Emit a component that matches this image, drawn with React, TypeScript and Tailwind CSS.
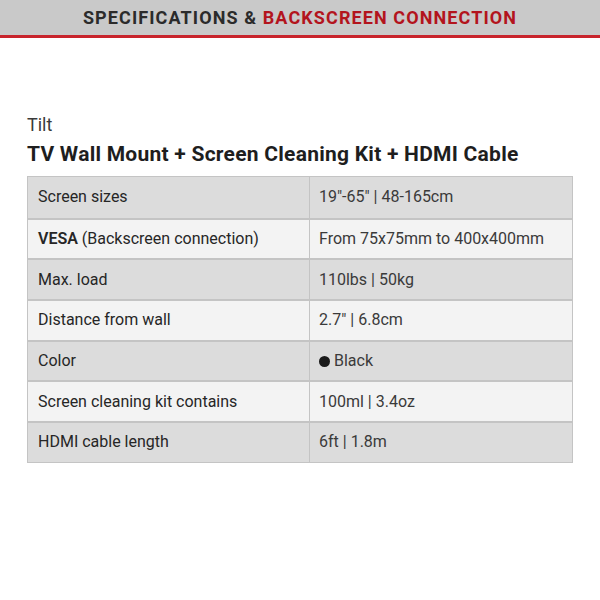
const rows: { label: React.ReactNode; value: React.ReactNode }[] = [
  { label: "Screen sizes", value: "19\u2033-65\u2033 | 48-165cm" },
  {
    label: (
      <span>
        <span className="font-semibold">VESA</span> (Backscreen connection)
      </span>
    ),
    value: "From 75x75mm to 400x400mm",
  },
  { label: "Max. load", value: "110lbs | 50kg" },
  { label: "Distance from wall", value: "2.7\u2033 | 6.8cm" },
  {
    label: "Color",
    value: (
      <span className="flex items-center gap-[4px]">
        <span className="inline-block h-[11px] w-[11px] rounded-full bg-[#1a1a1a]" />
        Black
      </span>
    ),
  },
  { label: "Screen cleaning kit contains", value: "100ml | 3.4oz" },
  { label: "HDMI cable length", value: "6ft | 1.8m" },
]

export default function App() {
  return (
    <div className="h-[600px] w-[600px] bg-white font-['Roboto',sans-serif] text-[#2a2a2a]">
      <div className="flex h-[38px] items-center justify-center border-b-[3px] border-[#c8242c] bg-[#c9c9c9]">
        <h1 className="text-[18px] font-bold tracking-[1.1px] text-[#2b2b2b]">
          SPECIFICATIONS &amp; <span className="text-[#b3141d]">BACKSCREEN CONNECTION</span>
        </h1>
      </div>

      <div className="px-[27px] pt-[76px]">
        <p className="text-[18px] leading-[22px] text-[#3a3a3a]">Tilt</p>
        <h2 className="mt-[5px] text-[21px] font-bold leading-[26px] tracking-[0.25px] text-[#1e1e1e]">
          TV Wall Mount + Screen Cleaning Kit + HDMI Cable
        </h2>

        <div className="mt-[9px] border border-[#c4c4c4]">
          {rows.map((row, i) => (
            <div
              key={i}
              className={`grid h-[40.7px] grid-cols-[282px_1fr] text-[16px] ${
                i > 0 ? "border-t-2 border-[#c4c4c4]" : ""
              } ${i % 2 === 0 ? "bg-[#dcdcdc]" : "bg-[#f3f3f3]"}`}
            >
              <div className="flex items-center border-r border-[#c4c4c4] pl-[10px] text-[#262626]">
                {row.label}
              </div>
              <div className="flex items-center pl-[9px] text-[#3a3a3a]">{row.value}</div>
            </div>
          ))}
        </div>
      </div>
    </div>
  )
}
